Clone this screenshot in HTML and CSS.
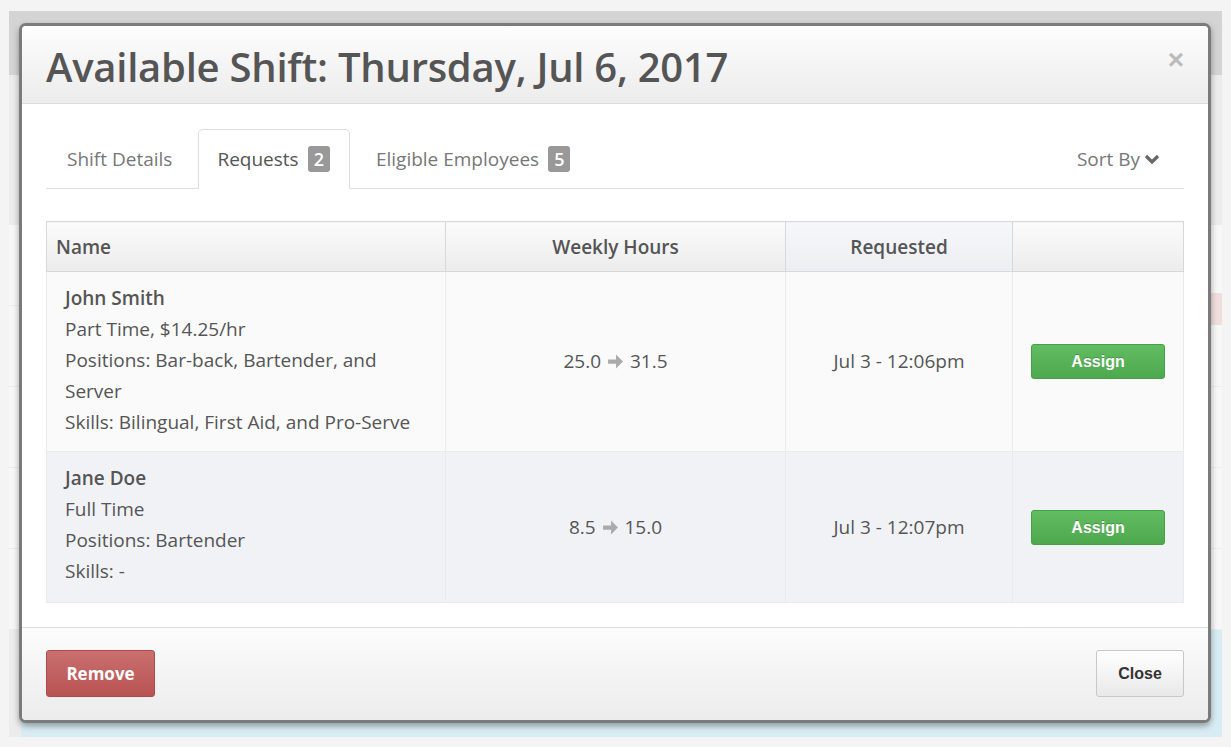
FILE: index.html
```html
<!DOCTYPE html>
<html>
<head>
    <meta charset="utf-8">
    <title>Available Shift</title>
    <link rel="stylesheet" href="styles.css">
</head>
<body>
<div class="page">
    <div class="page-head"></div>
    <div class="page-rows">
        <div class="page-row"></div>
        <div class="page-row"><span class="mark pink"></span></div>
        <div class="page-row"></div>
        <div class="page-row"></div>
        <div class="page-row"></div>
        <div class="page-row blue"></div>
    </div>
</div>

<div class="modal">
    <div class="modal-header">
        <h1>Available Shift: Thursday, Jul 6, 2017</h1>
        <span class="close-x">&times;</span>
    </div>
    <div class="modal-body">
        <div class="tabs">
            <a class="tab" href="#">Shift Details</a>
            <a class="tab active" href="#">Requests <span class="badge">2</span></a>
            <a class="tab" href="#">Eligible Employees <span class="badge">5</span></a>
            <a class="sort" href="#">Sort By
                <svg width="16" height="12" viewBox="0 0 16 12"><polyline points="2,3 8,9 14,3" fill="none" stroke="#666" stroke-width="3.2"/></svg>
            </a>
        </div>

        <table class="requests">
            <thead>
            <tr>
                <th class="col-name">Name</th>
                <th class="col-hours">Weekly Hours</th>
                <th class="col-req">Requested</th>
                <th class="col-act"></th>
            </tr>
            </thead>
            <tbody>
            <tr>
                <td class="col-name">
                    <b>John Smith</b><br>
                    Part Time, $14.25/hr<br>
                    Positions: Bar-back, Bartender, and<br>Server<br>
                    Skills: Bilingual, First Aid, and Pro-Serve
                </td>
                <td class="col-hours">25.0 <svg class="arrow" width="17" height="17" viewBox="0 0 16 16"><path d="M1 6h7.5V1.5L15 8l-6.5 6.5V10H1z" fill="#aaa"/></svg> 31.5</td>
                <td class="col-req">Jul 3 - 12:06pm</td>
                <td class="col-act"><a class="btn-assign" href="#">Assign</a></td>
            </tr>
            <tr class="alt">
                <td class="col-name">
                    <b>Jane Doe</b><br>
                    Full Time<br>
                    Positions: Bartender<br>
                    Skills: -
                </td>
                <td class="col-hours">8.5 <svg class="arrow" width="17" height="17" viewBox="0 0 16 16"><path d="M1 6h7.5V1.5L15 8l-6.5 6.5V10H1z" fill="#aaa"/></svg> 15.0</td>
                <td class="col-req">Jul 3 - 12:07pm</td>
                <td class="col-act"><a class="btn-assign" href="#">Assign</a></td>
            </tr>
            </tbody>
        </table>
    </div>
    <div class="modal-footer">
        <a class="btn-remove" href="#">Remove</a>
        <a class="btn-close" href="#">Close</a>
    </div>
</div>
</body>
</html>
```

FILE: styles.css
```css
* {
    margin: 0;
    padding: 0;
    box-sizing: border-box;
}

body {
    background: #f4f4f4;
    font-family: "Open Sans", "Liberation Sans", sans-serif;
    color: #555;
}

a {
    text-decoration: none;
}

/* page behind the dialog */
.page {
    margin: 11px 9px 0;
    height: 726px;
    background: #f7f7f7;
}

.page-head {
    height: 64px;
    background: #d4d4d4;
}

.page-rows {
    display: flex;
    flex-direction: column;
    gap: 1px;
    background: #ececec;
    padding-top: 150px;
}

.page-row {
    height: 80px;
    background: #f7f7f7;
    display: flex;
    justify-content: flex-end;
}

.mark.pink {
    width: 40px;
    height: 32px;
    margin-top: -13px;
    background: #f0dede;
}

.page-row.blue {
    background: #d8edf3;
    height: 140px;
    margin-left: 12px;
}

/* dialog */
.modal {
    position: absolute;
    left: 19px;
    top: 23px;
    width: 1192px;
    border: 3px solid #7b7b7b;
    border-radius: 7px;
    background: #fff;
    box-shadow: 0 3px 6px rgba(0, 0, 0, 0.35);
    overflow: hidden;
}

.modal-header {
    height: 78px;
    display: flex;
    align-items: center;
    justify-content: space-between;
    padding: 3px 24px 0 24px;
    background: linear-gradient(#fdfdfd, #ececec);
    border-bottom: 1px solid #dcdcdc;
}

.modal-header h1 {
    font-size: 40px;
    font-weight: 600;
    color: #555;
    letter-spacing: -0.25px;
}

.close-x {
    font-family: "Liberation Sans", sans-serif;
    font-size: 28px;
    font-weight: bold;
    color: #bbb;
    margin-top: -12px;
}

.modal-body {
    padding: 25px 24px 24px;
}

/* tabs */
.tabs {
    display: flex;
    align-items: flex-end;
    height: 60px;
    border-bottom: 1px solid #ddd;
}

.tab {
    display: flex;
    align-items: center;
    gap: 9px;
    height: 60px;
    padding: 0 20px 0 20px;
    margin-right: 5px;
    margin-bottom: -1px;
    font-size: 19px;
    color: #777;
    border: 1px solid transparent;
    border-radius: 5px 5px 0 0;
}

.tab.active {
    color: #555;
    background: #fff;
    border-color: #ddd;
    border-bottom-color: #fff;
    padding: 0 19px 0 18px;
}

.badge {
    display: inline-block;
    background: #999;
    color: #fff;
    font-size: 18px;
    font-weight: 600;
    line-height: 26px;
    padding: 0 6px;
    border-radius: 3px;
}

.sort {
    margin-left: auto;
    align-self: center;
    display: flex;
    align-items: center;
    gap: 4px;
    font-size: 19px;
    color: #777;
    margin-right: 24px;
}

/* table */
.requests {
    width: 100%;
    margin-top: 32px;
    border-collapse: collapse;
    border: 1px solid #d8d8dc;
    font-size: 19px;
}

.requests th {
    height: 50px;
    font-weight: 600;
    font-size: 19px;
    color: #555;
    text-align: center;
    background: linear-gradient(#fbfbfb, #ececec);
    border: 1px solid #d8d8dc;
}

.requests th.col-name {
    text-align: left;
    padding-left: 9px;
}

.requests th.col-req {
    background: linear-gradient(#f6f7fa, #eceef3);
}

.requests td {
    background: #fafafa;
    border: 1px solid #ebebee;
    text-align: center;
    vertical-align: middle;
    line-height: 31px;
}

.requests tr.alt td {
    background: #f1f2f6;
}

.requests td.col-name {
    text-align: left;
    padding: 11px 18px 13px;
}

.requests tr.alt td.col-name {
    padding-bottom: 15px;
}

.requests td.col-name b {
    font-weight: 600;
}

.col-name {
    width: 399px;
}

.col-hours {
    width: 340px;
}

.col-req {
    width: 227px;
}

.arrow {
    vertical-align: -2px;
    margin: 0 1px;
}

/* buttons */
.btn-assign {
    display: inline-block;
    width: 134px;
    height: 35px;
    line-height: 33px;
    font-family: "Liberation Sans", sans-serif;
    font-size: 16px;
    font-weight: bold;
    color: #fff;
    background: linear-gradient(#62bd62, #4ea84e);
    border: 1px solid #46a046;
    border-radius: 3px;
    text-shadow: 0 -1px 0 rgba(0, 0, 0, 0.2);
}

.modal-footer {
    display: flex;
    justify-content: space-between;
    align-items: center;
    padding: 22px 24px 23px;
    border-top: 1px solid #ddd;
    background: linear-gradient(#fcfcfc, #ececec);
}

.btn-remove {
    display: inline-block;
    width: 109px;
    height: 47px;
    line-height: 45px;
    text-align: center;
    font-size: 17px;
    font-weight: 700;
    color: #fff;
    background: linear-gradient(#ca6f6f, #b85352);
    border: 1px solid #b04a4a;
    border-radius: 3px;
}

.btn-close {
    display: inline-block;
    width: 88px;
    height: 47px;
    line-height: 45px;
    text-align: center;
    font-family: "Liberation Sans", sans-serif;
    font-size: 16px;
    font-weight: bold;
    color: #333;
    background: linear-gradient(#fff, #e9e9e9);
    border: 1px solid #c8c8c8;
    border-radius: 3px;
}
```
